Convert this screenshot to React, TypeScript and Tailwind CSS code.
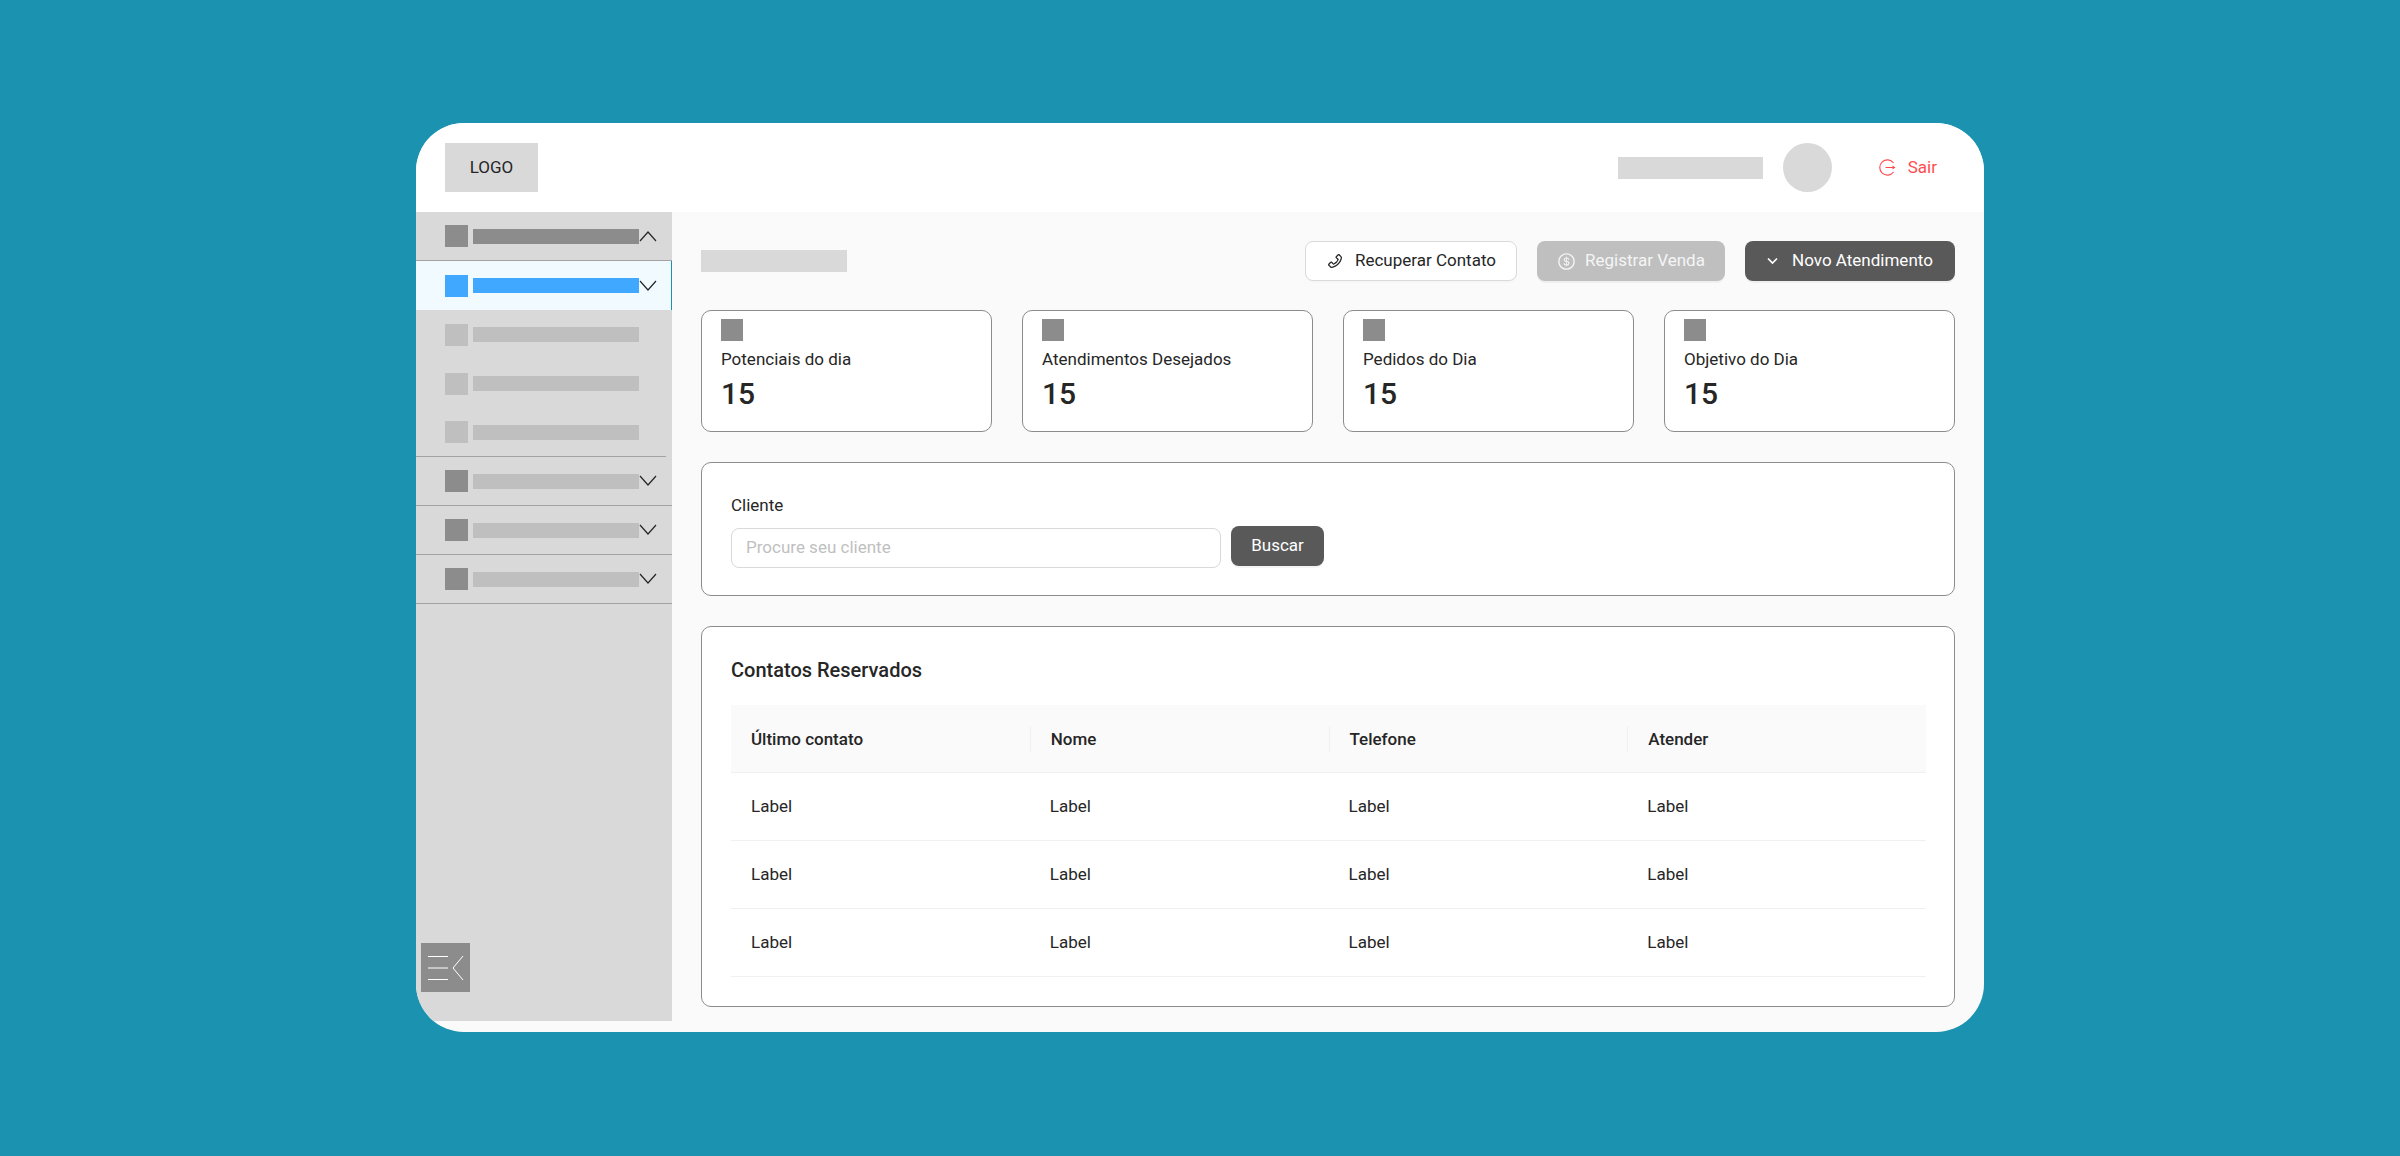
import { AiOutlineDollarCircle, AiOutlinePhone } from "react-icons/ai";

const stats = ["Potenciais do dia", "Atendimentos Desejados", "Pedidos do Dia", "Objetivo do Dia"];
const columns = ["Último contato", "Nome", "Telefone", "Atender"];

function Chevron({ up = false }: { up?: boolean }) {
	return (
		<svg width="18" height="12" viewBox="0 0 18 12" fill="none" className="shrink-0">
			<path
				d={up ? "M1 11 L9 2 L17 11" : "M1 1 L9 10 L17 1"}
				stroke="#262626"
				strokeWidth="1.2"
			/>
		</svg>
	);
}

interface MenuItemProps {
	iconClass: string;
	barClass: string;
	rowClass: string;
	chevron?: "up" | "down";
}

function MenuItem({ iconClass, barClass, rowClass, chevron }: MenuItemProps) {
	return (
		<div className={`flex items-center pl-[29px] ${rowClass}`}>
			<div className={`h-[22px] w-[23px] shrink-0 ${iconClass}`} />
			<div className={`ml-[5px] h-[15px] w-[166px] shrink-0 ${barClass}`} />
			{chevron && <Chevron up={chevron === "up"} />}
		</div>
	);
}

function Sidebar() {
	return (
		<aside className="mb-[11px] flex w-[256px] shrink-0 flex-col bg-[#d9d9d9]">
			<MenuItem
				iconClass="bg-[#8c8c8c]"
				barClass="bg-[#8c8c8c]"
				rowClass="h-[49px] border-b border-[#a3a3a3]"
				chevron="up"
			/>
			<MenuItem
				iconClass="bg-[#40a9ff]"
				barClass="bg-[#40a9ff]"
				rowClass="h-[49px] border-r border-[#1b93b0] bg-[#f0faff]"
				chevron="down"
			/>
			<MenuItem iconClass="bg-[#bfbfbf]" barClass="bg-[#bfbfbf]" rowClass="h-[49px]" />
			<MenuItem iconClass="bg-[#bfbfbf]" barClass="bg-[#bfbfbf]" rowClass="h-[49px]" />
			<MenuItem iconClass="bg-[#bfbfbf]" barClass="bg-[#bfbfbf]" rowClass="h-[48px]" />
			<div className="mr-[6px] h-px bg-[#a3a3a3]" />
			{[0, 1, 2].map((i) => (
				<MenuItem
					key={i}
					iconClass="bg-[#8c8c8c]"
					barClass="bg-[#bfbfbf]"
					rowClass="h-[49px] border-b border-[#a3a3a3]"
					chevron="down"
				/>
			))}
			<button
				type="button"
				className="mt-auto mb-[29px] ml-[5px] flex h-[49px] w-[49px] items-center justify-center bg-[#8c8c8c]"
			>
				<svg width="36" height="26" viewBox="0 0 36 26" fill="none">
					<path d="M0 1.5H20M0 13H20M0 24.5H20" stroke="#fff" strokeWidth="1" />
					<path d="M35 1 L25 13 L35 25" stroke="#fff" strokeWidth="1" />
				</svg>
			</button>
		</aside>
	);
}

function Header() {
	return (
		<header className="flex h-[89px] items-center justify-between bg-white pr-[47px] pl-[29px]">
			<div className="flex h-[49px] w-[93px] items-center justify-center bg-[#d9d9d9] text-[17px] text-[#262626]">
				LOGO
			</div>
			<div className="flex items-center">
				<div className="h-[22px] w-[145px] bg-[#d9d9d9]" />
				<div className="ml-[20px] h-[49px] w-[49px] rounded-full bg-[#d9d9d9]" />
				<div className="ml-[47px] flex items-center gap-[12px] text-[17px] text-[#ff4d4f]">
					<svg width="17" height="17" viewBox="0 0 17 17" fill="none">
						<path
							d="M14.5 4 A7.6 7.6 0 1 0 14.5 13"
							stroke="#ff4d4f"
							strokeWidth="1.2"
						/>
						<path d="M6.5 8.5H16" stroke="#ff4d4f" strokeWidth="1.2" />
						<path d="M13.5 6.5 L16.5 8.5 L13.5 10.5 Z" fill="#ff4d4f" />
					</svg>
					Sair
				</div>
			</div>
		</header>
	);
}

function Toolbar() {
	return (
		<div className="flex items-center justify-between">
			<div className="h-[22px] w-[146px] bg-[#d9d9d9]" />
			<div className="flex gap-[20px] text-[17px]">
				<button
					type="button"
					className="flex h-[40px] w-[212px] items-center justify-center gap-[11px] rounded-lg border border-[#d9d9d9] bg-white text-[#262626] shadow-[0_2px_0_rgba(0,0,0,0.016)]"
				>
					<AiOutlinePhone className="h-[18px] w-[18px]" />
					Recuperar Contato
				</button>
				<button
					type="button"
					className="flex h-[40px] w-[188px] items-center justify-center gap-[9px] rounded-lg bg-[#bfbfbf] text-[#f5f5f5] shadow-[0_2px_0_rgba(0,0,0,0.043)]"
				>
					<AiOutlineDollarCircle className="h-[19px] w-[19px]" />
					Registrar Venda
				</button>
				<button
					type="button"
					className="flex h-[40px] w-[210px] items-center justify-center gap-[14px] rounded-lg bg-[#595959] text-white shadow-[0_2px_0_rgba(0,0,0,0.043)]"
				>
					<svg width="11" height="8" viewBox="0 0 11 8" fill="none">
						<path d="M1 1.5 L5.5 6 L10 1.5" stroke="#fff" strokeWidth="1.7" />
					</svg>
					Novo Atendimento
				</button>
			</div>
		</div>
	);
}

function StatCards() {
	return (
		<div className="mt-[29px] grid grid-cols-4 gap-[30px]">
			{stats.map((label) => (
				<div
					key={label}
					className="h-[122px] rounded-[10px] border border-[#8c8c8c] bg-white pt-[8px] pl-[19px]"
				>
					<div className="h-[22px] w-[22px] bg-[#8c8c8c]" />
					<div className="mt-[6px] text-[17px] leading-[24px] text-[#262626]">{label}</div>
					<div className="mt-[4px] text-[30px] leading-[38px] font-medium text-[#262626]">15</div>
				</div>
			))}
		</div>
	);
}

function SearchCard() {
	return (
		<div className="mt-[30px] h-[134px] rounded-[10px] border border-[#8c8c8c] bg-white pt-[30px] pl-[29px]">
			<div className="text-[17px] leading-[24px] text-[#262626]">Cliente</div>
			<div className="mt-[11px] flex items-start gap-[10px]">
				<div className="flex h-[40px] w-[490px] items-center rounded-lg border border-[#d9d9d9] bg-white pl-[14px] text-[17px] text-[#bfbfbf]">
					Procure seu cliente
				</div>
				<button
					type="button"
					className="-mt-[2px] h-[40px] w-[93px] rounded-lg bg-[#595959] text-[17px] text-white shadow-[0_2px_0_rgba(0,0,0,0.043)]"
				>
					Buscar
				</button>
			</div>
		</div>
	);
}

function ContactsTable() {
	return (
		<div className="mt-[30px] h-[381px] rounded-[10px] border border-[#8c8c8c] bg-white pt-[30px] pr-[28px] pl-[29px]">
			<div className="text-[20px] leading-[26px] font-medium text-[#262626]">Contatos Reservados</div>
			<div className="mt-[22px]">
				<div className="grid h-[68px] grid-cols-4 items-center border-b border-[#f0f0f0] bg-[#fafafa] text-[17px] font-medium text-[#262626]">
					{columns.map((column, index) => (
						<div key={column} className={`pl-[20px] leading-[26px] ${index > 0 ? "border-l border-[#f0f0f0]" : ""}`}>
							{column}
						</div>
					))}
				</div>
				{[0, 1, 2].map((row) => (
					<div
						key={row}
						className="grid h-[68px] grid-cols-4 items-center border-b border-[#f0f0f0] text-[17px] text-[#262626]"
					>
						{columns.map((column) => (
							<div key={column} className="pl-[20px]">
								Label
							</div>
						))}
					</div>
				))}
			</div>
		</div>
	);
}

export default function App() {
	return (
		<div
			className="flex h-[1156px] justify-center bg-[#1b93b0] pt-[123px]"
			style={{ fontFamily: "Roboto, sans-serif" }}
		>
			<div className="flex h-[909px] w-[1568px] flex-col overflow-hidden rounded-[48px] bg-[#fafafa]">
				<Header />
				<div className="flex min-h-0 flex-1">
					<Sidebar />
					<main className="flex-1 pt-[29px] pr-[29px] pl-[29px]">
						<Toolbar />
						<StatCards />
						<SearchCard />
						<ContactsTable />
					</main>
				</div>
			</div>
		</div>
	);
}
